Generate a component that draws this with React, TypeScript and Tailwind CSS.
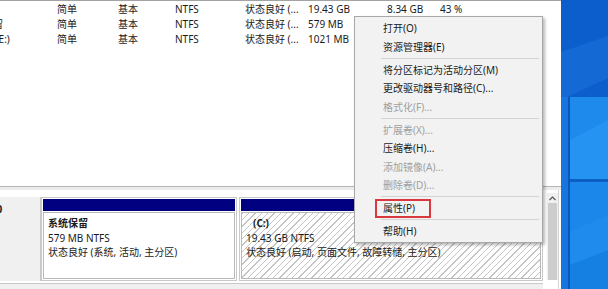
import React from "react";

const font = "font-['Noto_Sans','Noto_Sans_CJK_SC',sans-serif]";

const rows = [
  { name: "(C:)", cap: "19.43 GB", free: "8.34 GB", pct: "43 %" },
  { name: "系统保留", cap: "579 MB", free: "545 MB", pct: "94 %" },
  { name: "新加卷 (E:)", cap: "1021 MB", free: "1006 MB", pct: "98 %" },
];

type Item = { t: string; off?: boolean; mark?: boolean } | "sep";

const menu: Item[] = [
  { t: "打开(O)" },
  { t: "资源管理器(E)" },
  "sep",
  { t: "将分区标记为活动分区(M)" },
  { t: "更改驱动器号和路径(C)..." },
  { t: "格式化(F)...", off: true },
  "sep",
  { t: "扩展卷(X)...", off: true },
  { t: "压缩卷(H)..." },
  { t: "添加镜像(A)...", off: true },
  { t: "删除卷(D)...", off: true },
  "sep",
  { t: "属性(P)", mark: true },
  "sep",
  { t: "帮助(H)" },
];

function VolumeList() {
  return (
    <div className="h-[186px] bg-white border-t border-[#a3a3a3] overflow-hidden">
      {rows.map((r) => (
        <div
          key={r.name}
          className="flex h-[15px] items-center text-[10px] leading-none text-[#1a1a1a] whitespace-nowrap"
        >
          <span className="-ml-[37px] w-[94px] shrink-0">{r.name}</span>
          <span className="w-[61px] shrink-0">简单</span>
          <span className="w-[57px] shrink-0">基本</span>
          <span className="w-[70px] shrink-0">NTFS</span>
          <span className="w-[63px] shrink-0">状态良好 (...</span>
          <span className="w-[79px] shrink-0">{r.cap}</span>
          <span className="w-[53px] shrink-0">{r.free}</span>
          <span className="shrink-0">{r.pct}</span>
        </div>
      ))}
    </div>
  );
}

function Partition({
  title,
  size,
  status,
  hatched,
  className,
}: {
  title: string;
  size: string;
  status: string;
  hatched?: boolean;
  className: string;
}) {
  return (
    <div className={`flex flex-col border border-[#c9c9c9] p-[1px] ${className}`}>
      <div className="h-[12px] bg-[#000080]" />
      <div
        className={`flex-1 mt-[1px] border border-[#b9b9b9] pl-[4px] pt-[3px] text-[10px] leading-[14.5px] text-[#1a1a1a] whitespace-nowrap ${
          hatched
            ? "bg-[repeating-linear-gradient(135deg,#c4c4c4_0px,#c4c4c4_1px,#ffffff_1px,#ffffff_4.5px)]"
            : "bg-white"
        }`}
      >
        <div className={`font-bold ${hatched ? "pl-[7px]" : ""}`}>{title}</div>
        <div>{size}</div>
        <div>{status}</div>
      </div>
    </div>
  );
}

function DiskPane() {
  return (
    <div className="flex-1 flex bg-white">
      <div className="flex-1 flex flex-col pt-[7px]">
        <div className="flex h-[84px]">
          <div className="w-[41px] shrink-0 bg-[#f0f0f0] border-r border-[#c9c9c9] overflow-hidden pt-[5px] text-[10px] font-bold text-[#1a1a1a] whitespace-nowrap">
            <span className="-ml-[26px]">磁盘 0</span>
          </div>
          <Partition
            className="w-[196px]"
            title="系统保留"
            size="579 MB NTFS"
            status="状态良好 (系统, 活动, 主分区)"
          />
          <Partition
            className="ml-[2px] w-[304px]"
            hatched
            title="(C:)"
            size="19.43 GB NTFS"
            status="状态良好 (启动, 页面文件, 故障转储, 主分区)"
          />
        </div>
        <div className="mt-[2px] border-t border-[#c9c9c9] flex-1 bg-[#f0f0f0]" />
      </div>
      <div className="w-[11px] ml-[4px] mt-[3px] mb-[9px] flex flex-col bg-[#f0f0f0]">
        <div className="h-[10px] flex items-center justify-center">
          <svg width="7" height="5" viewBox="0 0 7 5">
            <path d="M0.5 4 L3.5 1 L6.5 4" fill="none" stroke="#555" strokeWidth="1.2" />
          </svg>
        </div>
        <div className="flex-1 mx-[1px] bg-[#cdcdcd]" />
      </div>
      <div className="w-[3px] border-l border-[#d5d5d5]" />
    </div>
  );
}

function ContextMenu() {
  return (
    <div className="absolute left-[354px] top-[16px] w-[189px] bg-[#f2f2f2] border border-[#a8a8a8] pt-[2px] pb-[1.5px] shadow-[2px_2px_3px_rgba(0,0,0,0.28)] text-[10px] leading-none whitespace-nowrap">
      {menu.map((m, i) =>
        m === "sep" ? (
          <div key={i} className="h-[4.5px] flex items-center">
            <div className="h-px flex-1 ml-[26px] mr-[3px] bg-[#d3d3d3]" />
          </div>
        ) : (
          <div
            key={i}
            className={`h-[18.5px] flex items-center pl-[28px] ${
              m.off ? "text-[#a0a0a0]" : "text-[#1a1a1a]"
            }`}
          >
            {m.mark ? (
              <span className="-ml-[8px] h-[19px] flex items-center border-2 border-[#d8383e] pl-[6px] pr-[14px]">
                {m.t}
              </span>
            ) : (
              m.t
            )}
          </div>
        )
      )}
    </div>
  );
}

function Desktop() {
  return (
    <div className="w-[47px] shrink-0 bg-[#0b5fca]">
      <svg width="47" height="289" viewBox="0 0 47 289">
        <rect width="47" height="289" fill="#0b5ecb" />
        <polygon points="0,52 47,36 47,78 0,100" fill="#1469d4" />
        <polygon points="0,97 7,97 7,289 0,289" fill="#1676de" />
        <rect x="7" y="97" width="2" height="192" fill="#0b55bb" />
        <rect x="9" y="97" width="38" height="82" fill="#1d8aec" />
        <polygon points="9,140 47,120 47,179 9,179" fill="#2593f1" />
        <rect x="9" y="179" width="38" height="3" fill="#0c5dc4" />
        <rect x="9" y="182" width="38" height="107" fill="#1c87ea" />
        <polygon points="9,232 47,215 47,289 9,289" fill="#1f8ced" />
        <polygon points="9,265 47,250 47,289 9,289" fill="#1680e2" />
      </svg>
    </div>
  );
}

export default function App() {
  return (
    <div className={`relative w-[608px] h-[289px] overflow-hidden flex ${font}`}>
      <div className="w-[561px] shrink-0 flex flex-col bg-white">
        <VolumeList />
        <div className="h-[4px] bg-[#ececec] border-t border-[#b5b5b5]" />
        <DiskPane />
      </div>
      <Desktop />
      <ContextMenu />
    </div>
  );
}
